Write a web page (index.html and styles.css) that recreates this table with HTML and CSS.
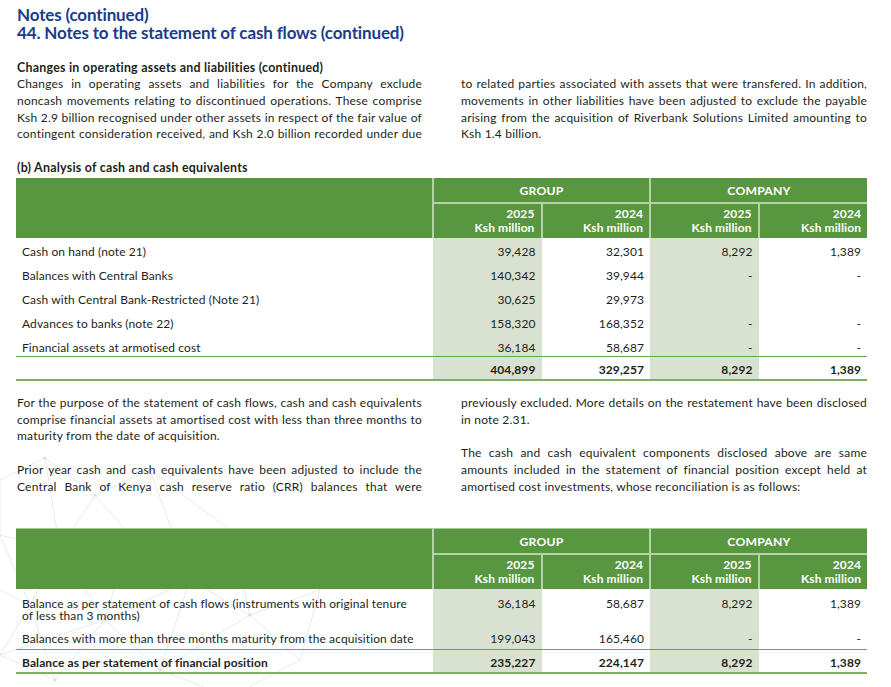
FILE: index.html
```html
<!DOCTYPE html>
<html lang="en">
<head>
<meta charset="utf-8">
<title>Notes to the statement of cash flows</title>
<link rel="stylesheet" href="styles.css">
</head>
<body>
<div class="page">
  <svg class="bg-net" width="330" height="257" viewBox="0 0 330 257" aria-hidden="true">
    <g stroke="#dde6ea" stroke-width="0.8" fill="none">
      <path d="M0 40 L45 18 L95 55 L60 110 L0 95 Z"/>
      <path d="M45 18 L60 110 L130 95 L95 55 L150 30"/>
      <path d="M0 95 L30 165 L60 110 L105 180 L130 95 L190 140 L150 30"/>
      <path d="M30 165 L0 215 L55 240 L105 180 L160 230 L190 140 L250 175 L230 90 L150 30"/>
      <path d="M55 240 L30 165 M160 230 L250 175 L300 220 L320 150 L230 90 M250 175 L320 150"/>
      <path d="M105 180 L190 140 M0 215 L105 180 M130 95 L230 90 M300 220 L230 257 L160 230"/>
      <path d="M0 150 L30 165 M60 110 L30 165"/>
    </g>
    <g fill="#d4dfe4">
      <circle cx="45" cy="18" r="1.6"/><circle cx="95" cy="55" r="1.6"/><circle cx="60" cy="110" r="1.6"/>
      <circle cx="130" cy="95" r="1.6"/><circle cx="30" cy="165" r="1.6"/><circle cx="105" cy="180" r="1.6"/>
      <circle cx="190" cy="140" r="1.6"/><circle cx="150" cy="30" r="1.6"/><circle cx="160" cy="230" r="1.6"/>
      <circle cx="250" cy="175" r="1.6"/><circle cx="230" cy="90" r="1.6"/><circle cx="55" cy="240" r="1.6"/>
    </g>
  </svg>

  <div class="content">
    <header class="title">
      <div>Notes (continued)</div>
      <div>44. Notes to the statement of cash flows (continued)</div>
    </header>

    <section class="two-col intro">
      <h3 class="subhead">Changes in operating assets and liabilities (continued)</h3>
      <p class="jp left">
        <span class="jl">Changes in operating assets and liabilities for the Company exclude</span>
        <span class="jl">noncash movements relating to discontinued operations. These comprise</span>
        <span class="jl">Ksh 2.9 billion recognised under other assets in respect of the fair value of</span>
        <span class="jl">contingent consideration received, and Ksh 2.0 billion recorded under due</span>
      </p>
      <p class="jp right">
        <span class="jl">to related parties associated with assets that were transfered. In addition,</span>
        <span class="jl">movements in other liabilities have been adjusted to exclude the payable</span>
        <span class="jl">arising from the acquisition of Riverbank Solutions Limited amounting to</span>
        <span class="jl last">Ksh 1.4 billion.</span>
      </p>
    </section>

    <h3 class="table-title">(b) Analysis of cash and cash equivalents</h3>

    <table class="fin fin-a">
      <colgroup>
        <col class="c-label"><col class="c-num"><col class="c-num"><col class="c-num"><col class="c-num">
      </colgroup>
      <thead>
        <tr class="h1">
          <th rowspan="2" class="blank"></th>
          <th colspan="2" class="grp">GROUP</th>
          <th colspan="2" class="grp">COMPANY</th>
        </tr>
        <tr class="h2">
          <th class="yr">2025<br>Ksh million</th>
          <th class="yr">2024<br>Ksh million</th>
          <th class="yr">2025<br>Ksh million</th>
          <th class="yr">2024<br>Ksh million</th>
        </tr>
      </thead>
      <tbody>
        <tr class="r first">
          <td class="lbl">Cash on hand (note 21)</td>
          <td class="num sh">39,428</td><td class="num">32,301</td><td class="num sh">8,292</td><td class="num">1,389</td>
        </tr>
        <tr class="r">
          <td class="lbl">Balances with Central Banks</td>
          <td class="num sh">140,342</td><td class="num">39,944</td><td class="num sh">-</td><td class="num">-</td>
        </tr>
        <tr class="r">
          <td class="lbl">Cash with Central Bank-Restricted (Note 21)</td>
          <td class="num sh">30,625</td><td class="num">29,973</td><td class="num sh"></td><td class="num"></td>
        </tr>
        <tr class="r">
          <td class="lbl">Advances to banks (note 22)</td>
          <td class="num sh">158,320</td><td class="num">168,352</td><td class="num sh">-</td><td class="num">-</td>
        </tr>
        <tr class="r lastrow">
          <td class="lbl">Financial assets at armotised cost</td>
          <td class="num sh">36,184</td><td class="num">58,687</td><td class="num sh">-</td><td class="num">-</td>
        </tr>
        <tr class="total">
          <td class="lbl"></td>
          <td class="num sh">404,899</td><td class="num">329,257</td><td class="num sh">8,292</td><td class="num">1,389</td>
        </tr>
      </tbody>
    </table>

    <section class="two-col notes">
      <div class="left">
        <p class="jp">
          <span class="jl">For the purpose of the statement of cash flows, cash and cash equivalents</span>
          <span class="jl">comprise financial assets at amortised cost with less than three months to</span>
          <span class="jl last">maturity from the date of acquisition.</span>
        </p>
        <p class="jp">
          <span class="jl">Prior year cash and cash equivalents have been adjusted to include the</span>
          <span class="jl">Central Bank of Kenya cash reserve ratio (CRR) balances that were</span>
        </p>
      </div>
      <div class="right">
        <p class="jp">
          <span class="jl">previously excluded. More details on the restatement have been disclosed</span>
          <span class="jl last">in note 2.31.</span>
        </p>
        <p class="jp">
          <span class="jl">The cash and cash equivalent components disclosed above are same</span>
          <span class="jl">amounts included in the statement of financial position except held at</span>
          <span class="jl last">amortised cost investments, whose reconciliation is as follows:</span>
        </p>
      </div>
    </section>

    <table class="fin fin-b">
      <colgroup>
        <col class="c-label"><col class="c-num"><col class="c-num"><col class="c-num"><col class="c-num">
      </colgroup>
      <thead>
        <tr class="h1">
          <th rowspan="2" class="blank"></th>
          <th colspan="2" class="grp">GROUP</th>
          <th colspan="2" class="grp">COMPANY</th>
        </tr>
        <tr class="h2">
          <th class="yr">2025<br>Ksh million</th>
          <th class="yr">2024<br>Ksh million</th>
          <th class="yr">2025<br>Ksh million</th>
          <th class="yr">2024<br>Ksh million</th>
        </tr>
      </thead>
      <tbody>
        <tr class="r tall">
          <td class="lbl wrap">Balance as per statement of cash flows (instruments with original tenure<br>of less than 3 months)</td>
          <td class="num sh">36,184</td><td class="num">58,687</td><td class="num sh">8,292</td><td class="num">1,389</td>
        </tr>
        <tr class="r lastrow">
          <td class="lbl">Balances with more than three months maturity from the acquisition date</td>
          <td class="num sh">199,043</td><td class="num">165,460</td><td class="num sh">-</td><td class="num">-</td>
        </tr>
        <tr class="total">
          <td class="lbl bold">Balance as per statement of financial position</td>
          <td class="num sh">235,227</td><td class="num">224,147</td><td class="num sh">8,292</td><td class="num">1,389</td>
        </tr>
      </tbody>
    </table>
  </div>
</div>
</body>
</html>
```

FILE: styles.css
```css
html, body {
  margin: 0;
  padding: 0;
  background: #ffffff;
}

body {
  font-family: "Lato", "Liberation Sans", sans-serif;
  color: #231f20;
  width: 891px;
  height: 687px;
  overflow: hidden;
}

.page {
  position: relative;
  width: 891px;
  height: 687px;
}

.bg-net {
  position: absolute;
  left: 0;
  top: 440px;
  z-index: 0;
}

.content {
  position: relative;
  z-index: 1;
  padding: 6px 0 0 17px;
  width: 850px;
}

.title {
  color: #1b3c8c;
  font-size: 17px;
  line-height: 17.5px;
  font-weight: 700;
  letter-spacing: -0.15px;
}

.two-col {
  display: grid;
  grid-template-columns: 405px 406px;
  column-gap: 39px;
}

.intro {
  margin-top: 18.5px;
  font-size: 12px;
  line-height: 16.7px;
  letter-spacing: 0.2px;
}

.subhead {
  grid-column: 1;
  grid-row: 1;
  margin: 0;
  font-size: 12.4px;
  line-height: 16.7px;
  font-weight: 700;
  letter-spacing: 0.25px;
}

.intro .left {
  grid-column: 1;
  grid-row: 2;
}

.intro .right {
  grid-column: 2;
  grid-row: 2;
}

.jp {
  margin: 0;
}

.jl {
  display: block;
  text-align: justify;
  text-align-last: justify;
}

.jl.last {
  text-align-last: left;
}

.table-title {
  margin: 16px 0 0;
  font-size: 12.4px;
  line-height: 17px;
  font-weight: 700;
  letter-spacing: 0.25px;
}

.fin {
  margin: 2px 0 0 -1px;
  width: 851px;
  border-collapse: collapse;
  table-layout: fixed;
  font-size: 12px;
  letter-spacing: 0.1px;
}

.c-label { width: 417px; }
.c-num { width: 108.5px; }

.fin th {
  background: #58963f;
  color: #ffffff;
  padding: 0 6px;
}

.fin .h1 th {
  height: 24px;
  font-weight: 700;
  font-size: 12.2px;
  text-align: center;
  border-bottom: 2px solid #b6d3a8;
  letter-spacing: 0.2px;
}

.fin .h1 th.blank {
  border-bottom: none;
}

.fin th.grp {
  border-left: 2px solid #b6d3a8;
}

.fin .h2 th {
  height: 34px;
  font-weight: 700;
  text-align: right;
  line-height: 14px;
  vertical-align: middle;
  border-left: 2px solid #b6d3a8;
}

.fin td {
  padding: 0 6px;
  line-height: 12px;
  vertical-align: top;
}

.fin td.sh {
  background: #d9e2d0;
}

.fin td.num {
  text-align: right;
}

.fin td.lbl {
  padding-left: 6px;
}

.fin tr.r td {
  height: 18px;
  padding-top: 6px;
}

.fin-a tr.first td {
  height: 18px;
  padding-top: 8px;
}

.fin-a tr.lastrow td {
  height: 14px;
}

.fin tr.lastrow td {
  border-bottom: 1.5px solid #6ba350;
}

.fin tr.total td {
  height: 15px;
  padding-top: 7px;
  font-weight: 700;
  border-bottom: 2.5px solid #7db062;
}

.fin-b {
  margin-top: 33px;
  border-top: 1px solid #a9cb98;
}

.fin-b tr.tall td {
  height: 31px;
  padding-top: 9px;
}

.fin-b td.wrap {
  line-height: 11.5px;
}

.fin-b tr.lastrow td {
  height: 16px;
  padding-top: 4px;
}

.fin td.bold {
  font-weight: 700;
}

.notes {
  margin-top: 14px;
  font-size: 12px;
  line-height: 16.7px;
  letter-spacing: 0.2px;
}

.notes .jp + .jp {
  margin-top: 16.7px;
}
```
